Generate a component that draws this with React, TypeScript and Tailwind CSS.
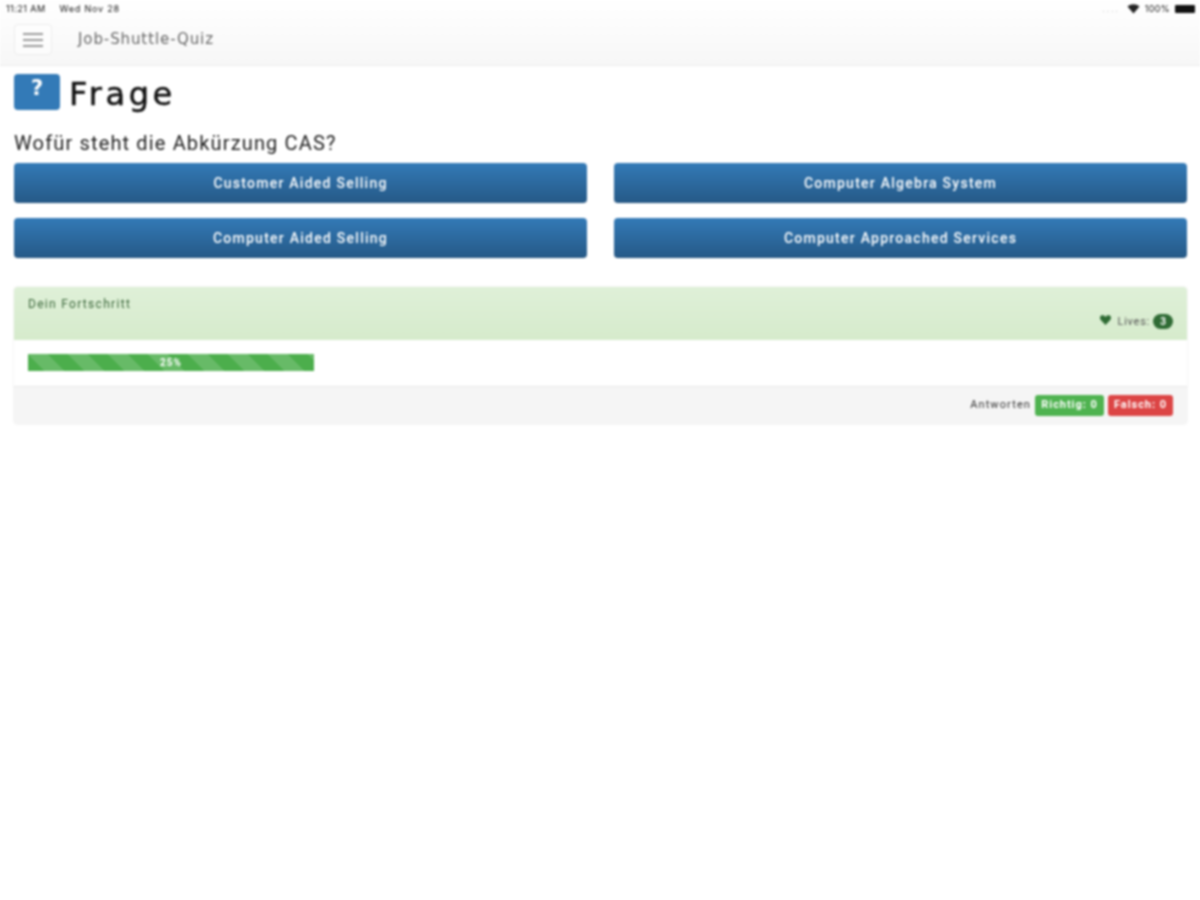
import React from "react";

const answers = ["Customer Aided Selling", "Computer Algebra System", "Computer Aided Selling", "Computer Approached Services"];

export default function App() {
  return (
    <div className="min-h-[900px] bg-white text-[#333] font-['Inter',sans-serif] blur-[0.8px]">
      <div className="h-[66px] bg-gradient-to-b from-white to-[#f7f7f7] border-b border-[#ececec]">
        <div className="h-[17px] pl-[6px] pr-[5px] flex items-center justify-between text-[9px] text-[#111]">
          <div className="flex gap-[14px] tracking-[0.45px]">
            <span>11:21 AM</span>
            <span className="tracking-[0.8px]">Wed Nov 28</span>
          </div>
          <div className="flex items-center">
            <span className="text-[#aaa] text-[8px] tracking-[2px] mr-[4px]">....</span>
            <svg width="13" height="10" viewBox="0 0 13 10" className="fill-[#222] ml-[3px]">
              <path d="M0.5 2.500C4 -0.500 9 -0.500 12.500 2.500L6.500 9.500Z" />
            </svg>
            <span className="ml-[5px] tracking-[0.35px]">100%</span>
            <div className="ml-[5px] w-[20px] h-[8px] bg-[#111] rounded-[1px]" />
          </div>
        </div>
        <div className="h-[31px] mt-[7px] pl-[14px] flex items-center">
          <div className="w-[38px] h-[31px] border border-[#ececec] rounded-[4px] flex flex-col items-center justify-center gap-[4px] bg-white/50">
            <span className="w-[20px] h-[2px] bg-[#999]" />
            <span className="w-[20px] h-[2px] bg-[#999]" />
            <span className="w-[20px] h-[2px] bg-[#999]" />
          </div>
          <span className="ml-[26px] text-[15px] text-[#666] font-['DejaVu_Sans',sans-serif] tracking-[0.9px]">Job-Shuttle-Quiz</span>
        </div>
      </div>

      <div className="pl-[14px] pr-[13px]">
        <div className="mt-[8px] flex items-center h-[36px]">
          <div className="w-[46px] h-[36px] rounded-[4px] bg-[#337ab7] flex items-center justify-center text-white text-[21px] font-bold font-['DejaVu_Sans',sans-serif] pb-[6px]">?</div>
          <span className="ml-[9px] pt-[3px] text-[32px] text-[#111] font-['DejaVu_Sans',sans-serif] leading-none tracking-[3.6px] [-webkit-text-stroke:0.5px_#111]">Frage</span>
        </div>

        <div className="mt-[22px] h-[22px] flex items-center text-[20px] text-[#222] font-['Roboto',sans-serif] tracking-[1.15px]">Wofür steht die Abkürzung CAS?</div>

        <div className="mt-[9px] grid grid-cols-2 gap-x-[27px] gap-y-[15px]">
          {answers.map((a) => (
            <div key={a} className="h-[40px] pt-[1px] rounded-[4px] bg-gradient-to-b from-[#337ab7] to-[#265a88] border-b border-[#245580] flex items-center justify-center text-white text-[14px] font-medium font-['Roboto',sans-serif] tracking-[1.25px]">
              {a}
            </div>
          ))}
        </div>

        <div className="mt-[29px] h-[137px] rounded-[4px] shadow-[0_0_2px_rgba(0,0,0,0.14)] flex flex-col overflow-hidden">
          <div className="h-[53px] shrink-0 bg-gradient-to-b from-[#dff0d8] to-[#d6ebcc] px-[14px] pt-[10px] relative text-[#3a663a] font-['Roboto',sans-serif]">
            <div className="text-[12px] leading-[14px] tracking-[1.3px]">Dein Fortschritt</div>
            <div className="absolute right-[14px] bottom-[11px] flex items-center text-[11px] leading-none">
              <svg width="13" height="12" viewBox="0 0 24 24" className="fill-[#2f6b34] mb-[3px] mr-[5px]">
                <path d="M12 22 2.500 12C0 9 .5 4.500 3.500 3 6.500 1.500 10 2.500 12 6c2-3.500 5.500-4.500 8.500-3 3 1.500 3.500 6 1 9Z" />
              </svg>
              <span className="text-[#555] tracking-[0.75px]">Lives:</span>
              <span className="ml-[3px] w-[20px] h-[15px] rounded-full bg-[#2f6b34] text-white text-[10px] font-bold flex items-center justify-center">3</span>
            </div>
          </div>

          <div className="h-[46px] shrink-0 bg-white px-[14px] pt-[14px]">
            <div className="w-[286px] h-[17px] flex items-center justify-center text-white text-[10px] font-bold tracking-[1px] bg-[#4cae4c] bg-[linear-gradient(45deg,rgba(255,255,255,0.15)_25%,transparent_25%,transparent_50%,rgba(255,255,255,0.15)_50%,rgba(255,255,255,0.15)_75%,transparent_75%,transparent)] bg-[length:40px_40px] font-['Roboto',sans-serif]">25%</div>
          </div>

          <div className="flex-1 bg-[#f5f5f5] border-t border-[#e8e8e8] pl-[14px] pr-[14px] flex items-center justify-end font-['Roboto',sans-serif]">
            <span className="text-[11px] text-[#333] tracking-[1.1px] mr-[4px]">Antworten</span>
            <span className="h-[21px] w-[69px] rounded-[3px] bg-[#4fb350] text-white text-[11px] font-bold tracking-[0.95px] flex items-center justify-center">Richtig: 0</span>
            <span className="ml-[4px] h-[21px] w-[65px] rounded-[3px] bg-[#dc4545] text-white text-[11px] font-bold tracking-[0.95px] flex items-center justify-center">Falsch: 0</span>
          </div>
        </div>
      </div>
    </div>
  );
}
